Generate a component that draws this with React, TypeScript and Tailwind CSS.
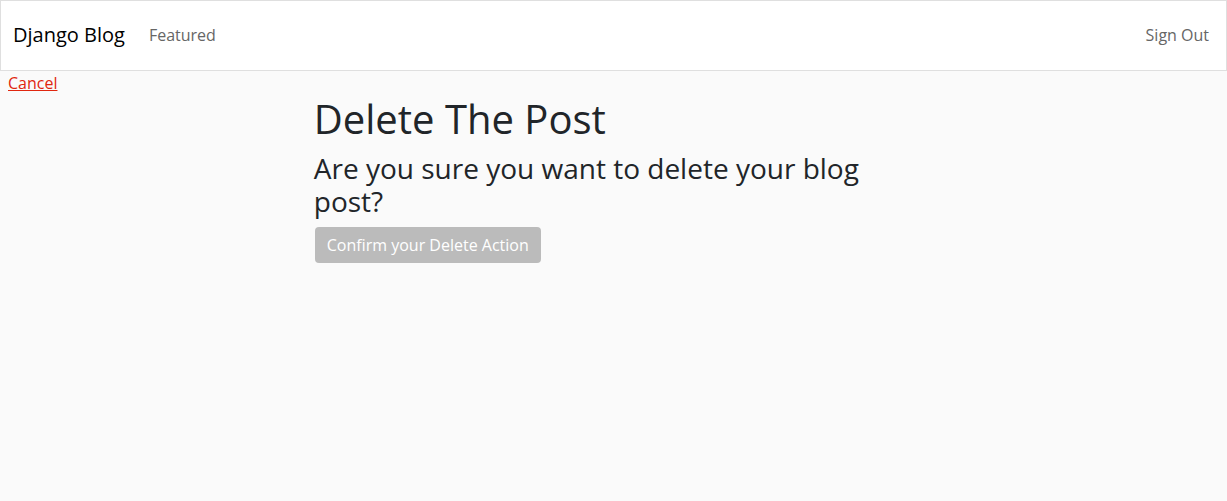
import React from "react";

const App = () => {
	return (
		<div
			className="min-h-[501px] bg-[#fafafa] text-[#212529]"
			style={{ fontFamily: '"Open Sans", sans-serif' }}
		>
			{/* Navbar */}
			<nav className="flex h-[71px] items-center justify-between border border-[#dfdfdf] bg-white pb-[2px] pl-[12px] pr-[17px]">
				<div className="flex items-center">
					<a href="#" className="text-[20px] text-black">
						Django Blog
					</a>
					<a href="#" className="ml-[24px] text-[16px] text-[#666]">
						Featured
					</a>
				</div>
				<a href="#" className="text-[16px] text-[#666]">
					Sign Out
				</a>
			</nav>

			<a href="#" className="ml-[8px] block text-[16px] leading-[24px] text-[#e0260f] underline">
				Cancel
			</a>

			{/* Delete confirm */}
			<div className="mx-auto w-1/2 px-[7px]">
				<h1 className="text-[40px] leading-[48px] font-normal">Delete The Post</h1>
				<h2 className="mt-[9px] text-[28px] leading-[33px] font-normal">
					Are you sure you want to delete your blog post?
				</h2>
				<button
					type="button"
					className="mt-[9px] ml-[1px] rounded-[4px] bg-[#bbbbbb] px-[12px] py-[6px] text-[16px] leading-[24px] text-white"
				>
					Confirm your Delete Action
				</button>
			</div>
		</div>
	);
};

export default App;
